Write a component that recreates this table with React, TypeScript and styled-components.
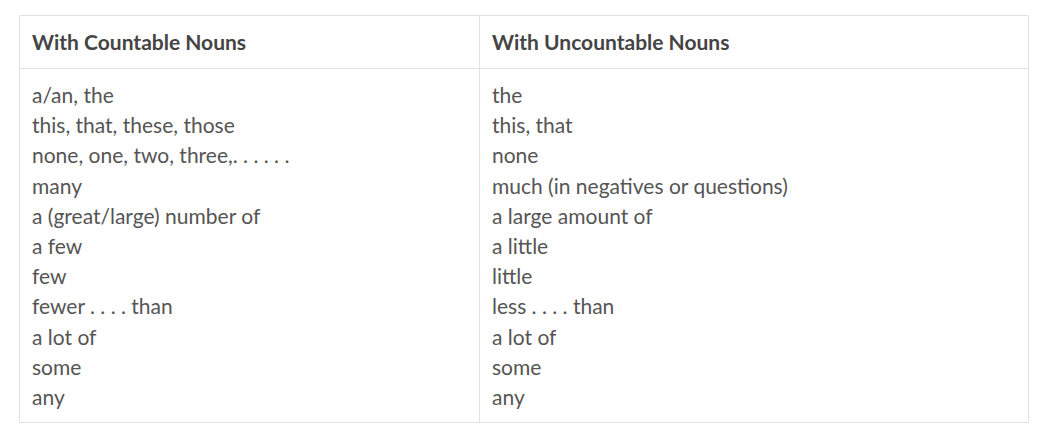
import React from "react";
import styled, { createGlobalStyle } from "styled-components";

const Global = createGlobalStyle`
  html, body { margin: 0; padding: 0; background: #fff; }
  body { font-family: Lato, "Open Sans", sans-serif; }
`;

const Wrap = styled.div`
  padding: 15px 0 0 19px;
`;

const Table = styled.table`
  border-collapse: collapse;
  width: 1009px;
  table-layout: fixed;
  font-family: Lato, sans-serif;
  font-size: 21px;
`;

const Th = styled.th<{ $w: number }>`
  width: ${(p) => p.$w}px;
  border: 1px solid #e2e2e2;
  text-align: left;
  font-weight: 700;
  color: #444;
  padding: 0 12px;
  height: 53px;
  box-sizing: border-box;
  line-height: 24px;
`;

const Td = styled.td`
  border: 1px solid #e2e2e2;
  vertical-align: top;
  color: #555;
  padding: 11px 12px 10px;
  line-height: 30.2px;
`;

const Line = styled.div`
  white-space: nowrap;
`;

const left = [
  "a/an, the",
  "this, that, these, those",
  "none, one, two, three,. . . . . .",
  "many",
  "a (great/large) number of",
  "a few",
  "few",
  "fewer . . . . than",
  "a lot of",
  "some",
  "any",
];

const right = [
  "the",
  "this, that",
  "none",
  "much (in negatives or questions)",
  "a large amount of",
  "a little",
  "little",
  "less . . . . than",
  "a lot of",
  "some",
  "any",
];

export default function App() {
  return (
    <>
      <Global />
      <Wrap>
        <Table>
          <thead>
            <tr>
              <Th $w={460}>With Countable Nouns</Th>
              <Th $w={549}>With Uncountable Nouns</Th>
            </tr>
          </thead>
          <tbody>
            <tr>
              <Td>
                {left.map((t, i) => (
                  <Line key={i}>{t}</Line>
                ))}
              </Td>
              <Td>
                {right.map((t, i) => (
                  <Line key={i}>{t}</Line>
                ))}
              </Td>
            </tr>
          </tbody>
        </Table>
      </Wrap>
    </>
  );
}
